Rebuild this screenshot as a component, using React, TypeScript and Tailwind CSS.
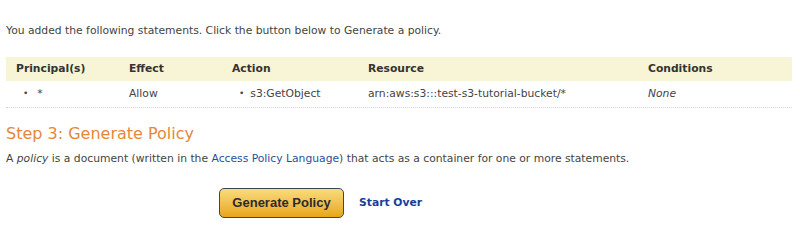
export default function App() {
  const cols = ['w-[113px]', 'w-[103px]', 'w-[136px]', 'w-[280px]', 'flex-1'];
  return (
    <div className="w-[800px] h-[248px] bg-white text-[#444] text-[10.75px] font-['DejaVu_Sans',Verdana,sans-serif] px-[6px] pt-[24px]">
      <p className="leading-[14px]">You added the following statements. Click the button below to Generate a policy.</p>

      <div className="mt-[19px] w-[786px]">
        <div className="flex h-[24px] items-center bg-[#f7f5d6] pl-[10px] font-bold text-[#333]">
          <div className={cols[0]}>Principal(s)</div>
          <div className={cols[1]}>Effect</div>
          <div className={cols[2]}>Action</div>
          <div className={cols[3]}>Resource</div>
          <div className={cols[4]}>Conditions</div>
        </div>
        <div className="flex h-[27px] items-center pl-[10px] border-b border-dotted border-[#d8d6b8]">
          <div className={cols[0] + ' flex items-center'}>
            <span className="ml-[7px] mr-[9px] text-[9px]">•</span>*
          </div>
          <div className={cols[1]}>Allow</div>
          <div className={cols[2] + ' flex items-center'}>
            <span className="ml-[7px] mr-[6px] text-[9px]">•</span>s3:GetObject
          </div>
          <div className={cols[3]}>arn:aws:s3:::test-s3-tutorial-bucket/*</div>
          <div className={cols[4] + ' italic'}>None</div>
        </div>
      </div>

      <h2 className="mt-[15px] text-[16px] leading-[22px] text-[#e5873a]">Step 3: Generate Policy</h2>
      <p className="mt-[7px] leading-[14px]">
        A <i>policy</i> is a document (written in the{' '}
        <a className="text-[#1f4fa0]">Access Policy Language</a>) that acts as a container for one or more statements.
      </p>

      <div className="mt-[22px] flex items-center pl-[213px]">
        <button className="h-[30px] w-[125px] rounded-[5px] border border-[#3b4757] bg-gradient-to-b from-[#f8dc7a] to-[#e8a60f] font-['Liberation_Sans',Arial,sans-serif] text-[13px] font-bold text-[#2b2b2b]">
          Generate Policy
        </button>
        <a className="ml-[15px] font-bold text-[#1a3d9a]">Start Over</a>
      </div>
    </div>
  );
}
